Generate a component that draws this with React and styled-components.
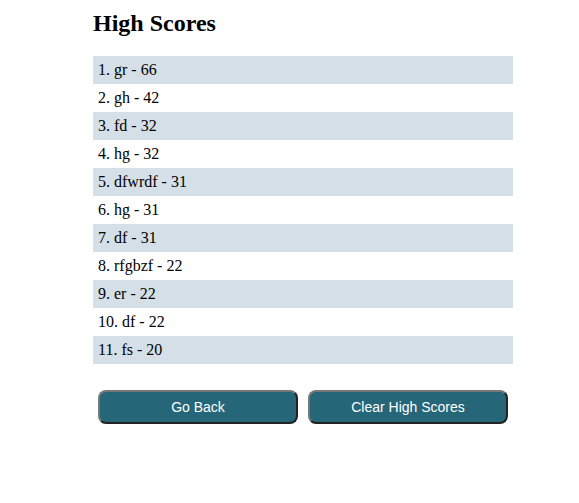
import React from "react";
import styled, { createGlobalStyle } from "styled-components";

const scores = [
  ["gr", 66],
  ["gh", 42],
  ["fd", 32],
  ["hg", 32],
  ["dfwrdf", 31],
  ["hg", 31],
  ["df", 31],
  ["rfgbzf", 22],
  ["er", 22],
  ["df", 22],
  ["fs", 20],
];

export default function App() {
  return (
    <>
      <GlobalStyle />
      <Page>
        <Title>High Scores</Title>
        <ScoreList>
          {scores.map(([name, score], i) => (
            <ScoreRow key={i} $striped={i % 2 === 0}>
              {i + 1}. {name} - {score}
            </ScoreRow>
          ))}
        </ScoreList>
        <ButtonRow>
          <ActionButton>Go Back</ActionButton>
          <ActionButton>Clear High Scores</ActionButton>
        </ButtonRow>
      </Page>
    </>
  );
}

const GlobalStyle = createGlobalStyle`
  body {
    margin: 0;
    background: #ffffff;
    font-family: "Liberation Serif", "Times New Roman", serif;
    color: #000;
  }
`;

const Page = styled.div`
  width: 420px;
  margin-left: 93px;
  padding-top: 10px;
`;

const Title = styled.h1`
  font-size: 24px;
  font-weight: bold;
  margin: 0;
  line-height: 26px;
  padding-bottom: 20px;
`;

const ScoreList = styled.div`
  display: flex;
  flex-direction: column;
`;

const ScoreRow = styled.div`
  height: 28px;
  line-height: 28px;
  padding-left: 5px;
  font-size: 16px;
  background: ${(p) => (p.$striped ? "#d4dfe7" : "transparent")};
`;

const ButtonRow = styled.div`
  display: flex;
  gap: 10px;
  padding: 26px 5px 0;
`;

const ActionButton = styled.button`
  width: 200px;
  height: 34px;
  background: #256678;
  color: #ffffff;
  font-family: "Liberation Sans", Arial, sans-serif;
  font-size: 14px;
  border-radius: 8px;
  border: 2px solid;
  border-color: #777777 #222222 #222222 #777777;
  cursor: pointer;
`;
